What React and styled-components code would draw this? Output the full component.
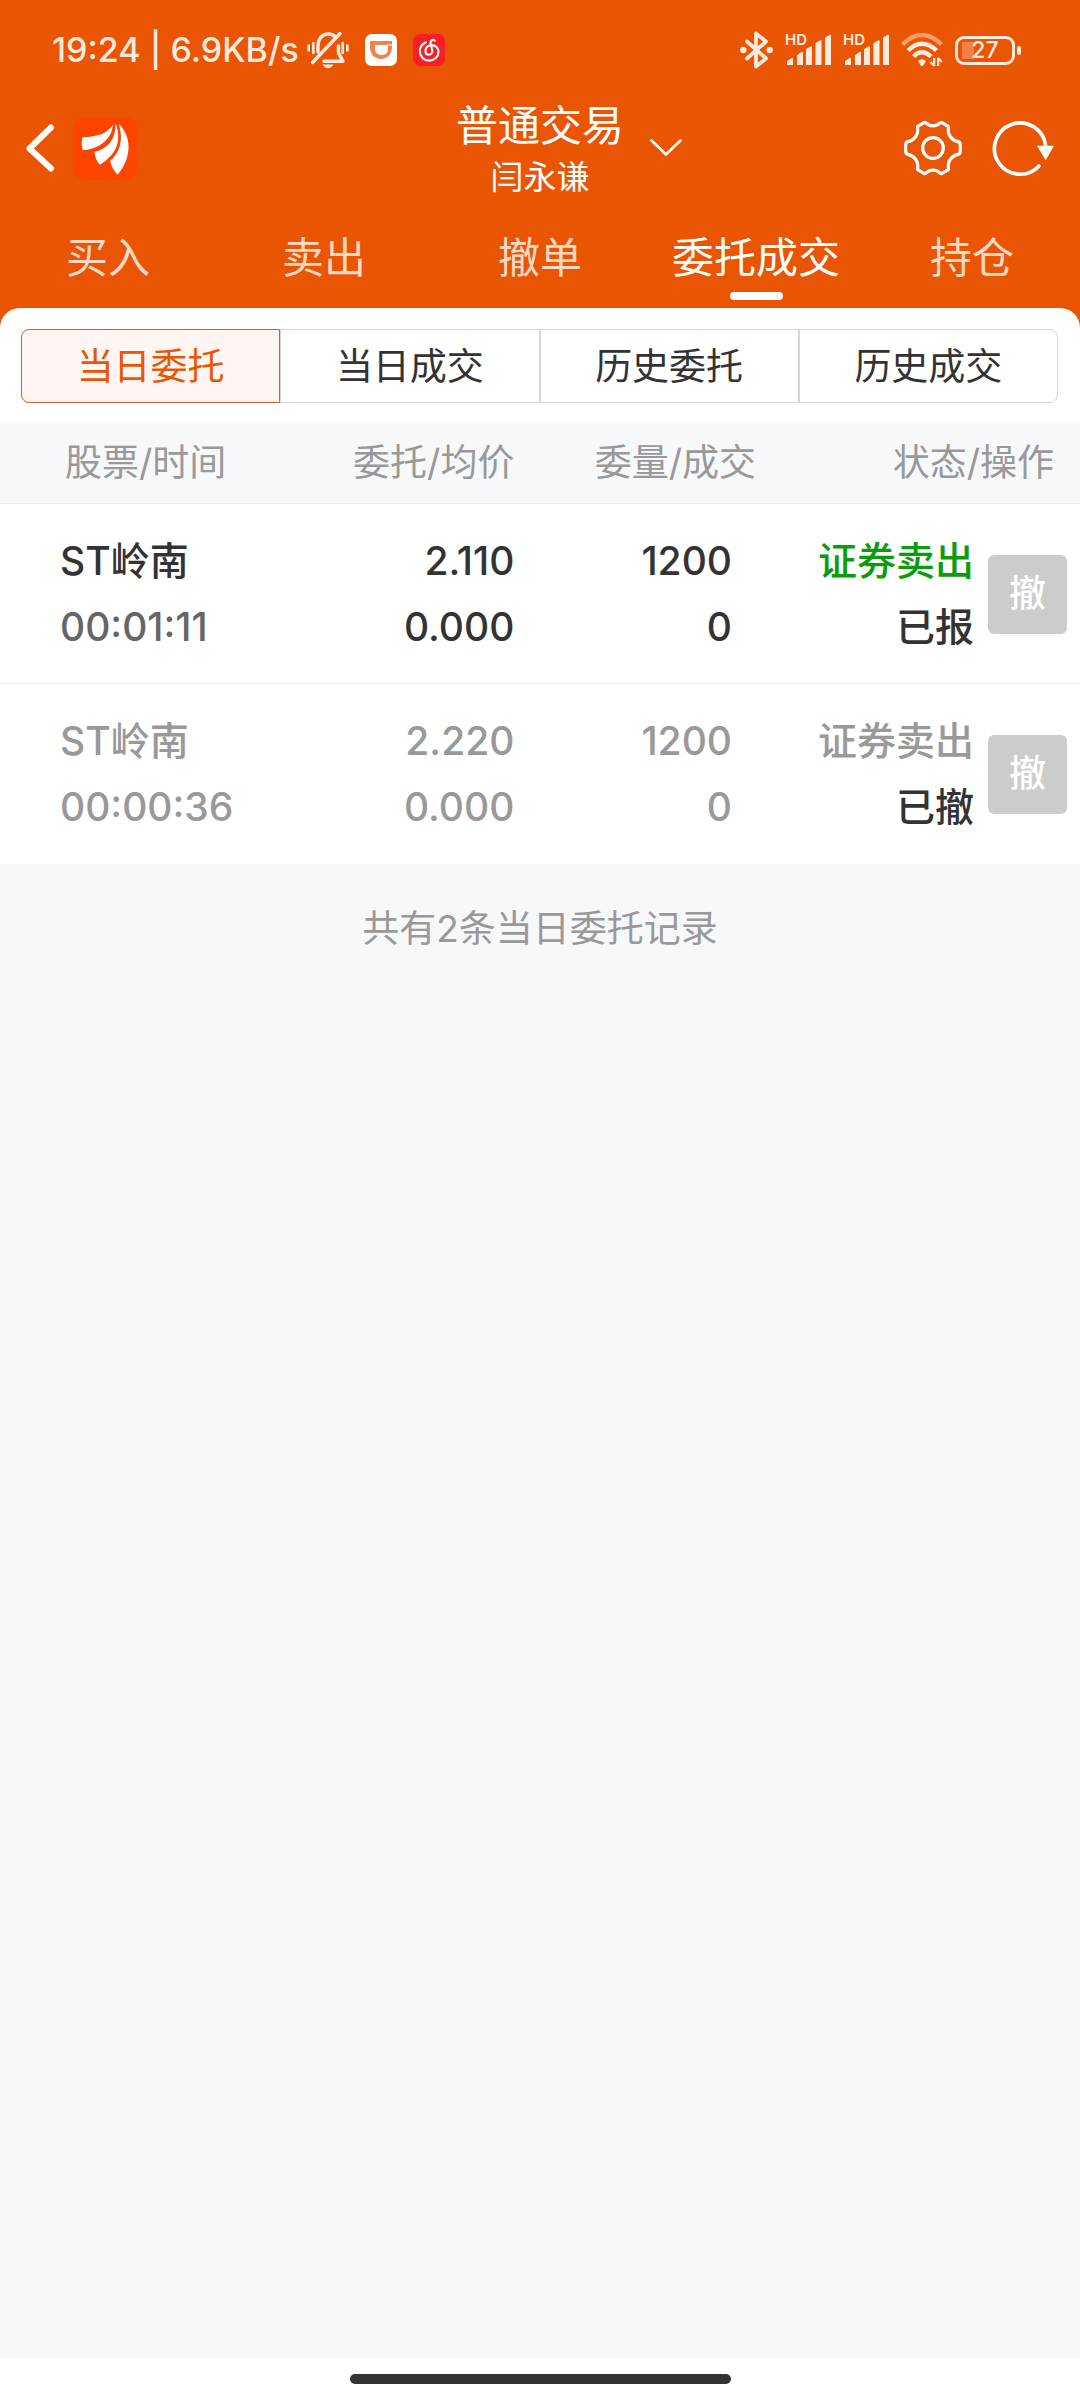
import React, { useState } from "react";
import styled, { createGlobalStyle } from "styled-components";

const brand = "#ea5504";
const statusInk = "#ffeadd";

const GlobalStyle = createGlobalStyle`
  * { box-sizing: border-box; }
  body {
    margin: 0;
    background: #f7f8fa;
    color: #333;
    font-family: Inter, "Noto Sans CJK SC", sans-serif;
  }
  button {
    margin: 0;
    padding: 0;
    border: 0;
    background: none;
    color: inherit;
    font: inherit;
  }
  svg { display: block; flex: none; }
`;

const Screen = styled.div`
  display: flex;
  flex-direction: column;
  min-height: 100vh;
`;

const Header = styled.header`
  background: ${brand};
  color: #fff;
`;

const StatusBar = styled.div`
  display: flex;
  align-items: center;
  justify-content: space-between;
  height: 97px;
  padding: 3px 59px 0 52px;
  color: ${statusInk};
`;

const StatusGroup = styled.div`
  display: flex;
  align-items: center;
  gap: ${(p) => p.$gap}px;
`;

const Clock = styled.span`
  margin-right: -8px;
  font-size: 34px;
  font-weight: 500;
  line-height: 44px;
  white-space: nowrap;
`;

const Battery = styled.div`
  display: flex;
  align-items: center;
  gap: 2px;
`;

const BatteryBody = styled.span`
  display: flex;
  align-items: center;
  justify-content: center;
  width: 60px;
  height: 29px;
  border: 3px solid ${statusInk};
  border-radius: 9px;
  background: linear-gradient(#f28046, #f28046) 4px center / 12px 17px no-repeat;
  font-size: 23px;
  font-weight: 500;
  line-height: 24px;
`;

const BatteryTip = styled.span`
  width: 4px;
  height: 9px;
  border-radius: 2px;
  background: ${statusInk};
`;

const TitleBar = styled.div`
  display: grid;
  grid-template-columns: 1fr auto 1fr;
  align-items: center;
  height: 102px;
  padding: 0 25px;
`;

const BarSide = styled.div`
  display: flex;
  align-items: center;
  gap: ${(p) => p.$gap}px;
`;

const IconButton = styled.button`
  display: block;
  margin-right: ${(p) => (p.$push ? "auto" : "0")};
  margin-left: ${(p) => (p.$push ? "26px" : "0")};
`;

const Titles = styled.div`
  text-align: center;
`;

const Title = styled.h1`
  margin: 0;
  font-size: 42px;
  font-weight: 400;
  line-height: 58px;
`;

const Account = styled.div`
  font-size: 33px;
  line-height: 44px;
`;

const Nav = styled.nav`
  display: flex;
`;

const NavTab = styled.button`
  display: flex;
  flex: 1;
  flex-direction: column;
  align-items: center;
  gap: 4px;
  padding: 29px 0 8px;
  color: ${(p) => (p.$active ? "#fff" : "#ffd9c4")};
  font-size: 42px;
  line-height: 60px;
  white-space: nowrap;

  &::after {
    content: "";
    width: 53px;
    height: 8px;
    border-radius: 4px;
    background: ${(p) => (p.$active ? "#fff" : "transparent")};
  }
`;

const PanelBack = styled.div`
  background: ${brand};
`;

const Panel = styled.div`
  padding: 21px 22px 20px 21px;
  border-radius: 20px 20px 0 0;
  background: #fff;
`;

const Segments = styled.div`
  display: flex;
`;

const Segment = styled.button`
  flex: 1;
  height: 74px;
  padding-top: 2px;
  border: 1px solid ${(p) => (p.$active ? "#c8602f" : "#d3d6da")};
  background: ${(p) => (p.$active ? "#fff6f3" : "#fff")};
  color: ${(p) => (p.$active ? brand : "#333")};
  font-size: 37px;
  line-height: 52px;

  &:first-child { border-radius: 8px 0 0 8px; }
  &:last-child { border-radius: 0 8px 8px 0; }
`;

const Table = styled.table`
  width: 100%;
  table-layout: fixed;
  border-collapse: separate;
  border-spacing: 0;
`;

const Col = styled.col`
  width: ${(p) => p.$w}%;
`;

const HeadCell = styled.th`
  height: 81px;
  padding: 0 ${(p) => p.$right || 0}px 0 ${(p) => p.$left || 0}px;
  border-bottom: 1px solid #ebedef;
  color: #999;
  font-size: 37px;
  font-weight: 400;
  line-height: 52px;
  text-align: ${(p) => (p.$left ? "left" : "right")};
  white-space: nowrap;
`;

const Cell = styled.td`
  padding: 24px ${(p) => p.$right || 0}px 23px ${(p) => p.$left || 0}px;
  border-bottom: 1px solid ${(p) => (p.$last ? "#fff" : "#ebedef")};
  background: #fff;
  color: ${(p) => (p.$muted ? "#999" : "#333")};
  font-size: 39px;
  font-weight: 500;
  line-height: 66px;
  text-align: ${(p) => (p.$left ? "left" : "right")};
  white-space: nowrap;
`;

const Line = styled.div`
  color: ${(p) => p.$color || "inherit"};
`;

const Actions = styled.div`
  display: flex;
  align-items: center;
  justify-content: flex-end;
  gap: 14px;
`;

const CancelButton = styled.button`
  width: 79px;
  height: 79px;
  border-radius: 6px;
  background: #ccc;
  color: #fff;
  font-size: 37px;
  font-weight: 500;
  line-height: 52px;
`;

const Summary = styled.p`
  flex: 1;
  margin: 0;
  padding-top: 39px;
  color: #999;
  font-size: 37px;
  line-height: 52px;
  text-align: center;
`;

const HomeArea = styled.footer`
  display: flex;
  justify-content: center;
  height: 42px;
  padding-top: 16px;
  background: #fff;
`;

const HomeBar = styled.span`
  width: 381px;
  height: 10px;
  border-radius: 5px;
  background: #333;
`;

const MutedBell = () => (
  <svg width="42" height="38" viewBox="0 0 42 38" fill="none" stroke={statusInk} strokeWidth="3.4" strokeLinecap="round">
    <path d="M11 21v-6c0-7 4-12 10-12 3.500 0 6 1.200 8 3.600" />
    <path d="M31.500 15v7l4.500 8.300H17" strokeLinejoin="round" />
    <path d="M5.500 31.500 33 2.500" />
    <path d="M1.700 14.500v5M6.300 12v10M35.700 12v10M40.300 14.500v5" strokeWidth="2.600" />
    <path d="M15.500 33.600h11c-1.500 2.400-3.200 3.600-5.500 3.600s-4-1.200-5.500-3.600z" fill={statusInk} stroke="none" />
  </svg>
);

const RideIcon = () => (
  <svg width="32" height="32" viewBox="0 0 32 32">
    <rect width="32" height="32" rx="7" fill="#fff" />
    <path d="M5 7h22v6c0 7-4.500 12-11 12S5 20 5 13z" fill="#f2824e" />
    <path d="M10 11h13v4c0 3.600-2.500 6-6.500 6S10 18.600 10 15z" fill="#fff" />
    <path d="M21.500 11H27" stroke="#fff" strokeWidth="1" />
  </svg>
);

const MusicIcon = () => (
  <svg width="32" height="32" viewBox="0 0 32 32">
    <rect width="32" height="32" rx="7" fill="#fb1e24" />
    <g fill="none" stroke="#fff" strokeWidth="2.100" strokeLinecap="round">
      <path d="M13 8.300C9 10 6.800 13.500 6.800 17.300c0 5.200 4.200 9.300 9.300 9.300 5.200 0 9.400-3.800 9.400-8.800 0-4-3-6.700-6.800-6.700-3.600 0-6.300 2.400-6.300 5.700 0 2.300 1.500 3.900 3.500 3.900 2.400 0 3.800-2 3.300-4.500L17.600 9c-.5-2.600 2-4 4.200-2.400" />
    </g>
  </svg>
);

const BluetoothIcon = () => (
  <svg width="33" height="38" viewBox="0 0 33 38" fill="none" stroke={statusInk} strokeWidth="3.800" strokeLinejoin="round" strokeLinecap="round">
    <path d="M7 10.500 26 27.500 16 35.500V2.500L26 10.500 7 27.500" />
    <circle cx="3.300" cy="19" r="3.200" fill={statusInk} stroke="none" />
    <circle cx="29.700" cy="19" r="3.200" fill={statusInk} stroke="none" />
  </svg>
);

const Signal = styled.span`
  display: grid;
  width: 46px;
  height: 40px;

  > * { grid-area: 1 / 1; }
  > svg { align-self: center; }
`;

const SignalLabel = styled.span`
  font-size: 15px;
  font-weight: 600;
  line-height: 20px;
`;

const SignalIcon = () => (
  <Signal>
    <svg width="46" height="32" viewBox="0 0 46 32" fill={statusInk}>
      <path d="M2 28q0-1 1-1.500L6.500 24q1.500-.5 1.500.5V31H2zM12 22q0-1 1-1.500L16.500 18q1.500-.5 1.500.5V31h-6zM21 16q0-1 1-1.500L25.500 12.500q1.500-.5 1.500.5V31h-6zM30.500 10q0-1 1-1.500L35 6.500q1.500-.5 1.500.5V31h-6zM40 4.500q0-1 1-1.500L44.500 1q1.500-.5 1.500.5V31h-6z" />
    </svg>
    <SignalLabel>HD</SignalLabel>
  </Signal>
);

const WifiIcon = () => (
  <svg width="42" height="34" viewBox="0 0 42 34" fill="none" strokeWidth="4.400" strokeLinecap="butt">
    <path d="M1.500 11.500Q21-7.500 40.500 11.500" stroke="#f79c6b" />
    <path d="M7 17.500Q21 4 35.500 17.500" stroke={statusInk} />
    <path d="M12.500 23.500Q21 15 30 23.500" stroke={statusInk} />
    <path d="M17 28q4-3.500 8 0l-2.500 4.300q-1.500 1.700-3 0z" fill={statusInk} />
    <path d="M33.200 33v-8M37.200 33v-8" stroke={statusInk} strokeWidth="2.200" />
    <path d="M33.200 33l-3.700-4M37.200 25l3.700 4" stroke={statusInk} strokeWidth="2" />
  </svg>
);

const BackIcon = () => (
  <svg width="30" height="48" viewBox="0 0 30 48" fill="none" stroke="#fff" strokeWidth="6" strokeLinecap="round" strokeLinejoin="round">
    <path d="M26 3.500 4.500 24.500 26 44.500" />
  </svg>
);

const BrandLogo = () => (
  <svg width="63" height="63" viewBox="0 0 190 190" fill="#fff">
    <rect width="190" height="190" rx="34" fill="#ff4400" />
    <path d="M119 20C104 49 72 59 25 61q-4 19 1 39C62 97 111 80 119 20z" />
    <path d="M125 17C128 65 102 96 62 105q2 23 15 39C121 120 150 78 125 17z" />
    <path d="M135 20C150 68 139 105 109 133q5 23 22 41C162 140 186 72 135 20z" />
    <path d="M120 21C119 67 97 86 61 97M130 20C147 72 128 109 101 130" fill="none" stroke="#ff4400" strokeWidth="5" />
  </svg>
);

const ChevronIcon = () => (
  <svg width="32" height="18" viewBox="0 0 32 18" fill="none" stroke="#fff" strokeWidth="2.600" strokeLinecap="round" strokeLinejoin="round">
    <path d="M1.500 1.500 16 15.500 30.500 1.500" />
  </svg>
);

const GearIcon = () => (
  <svg width="58" height="58" viewBox="0 0 180 180" fill="none" stroke="#fff" strokeWidth="10" strokeLinejoin="round">
    <path d="M62 11Q65 9 68 12C80 24 100 24 112 12Q115 9 118 11L135 21Q139 23 138 27C134 48 147 66 170 71Q173 72 174 76Q176 90 174 104Q173 108 170 109C147 114 134 132 138 153Q139 157 135 159L118 169Q115 171 112 168C100 156 80 156 68 168Q65 171 62 169L45 159Q41 157 42 153C46 132 33 114 10 109Q7 108 6 104Q4 90 6 76Q7 72 10 71C33 66 46 48 42 27Q41 23 45 21Z" />
    <circle cx="90" cy="90" r="32" />
  </svg>
);

const RefreshIcon = () => (
  <svg width="64" height="60" viewBox="0 0 192 180" fill="none" stroke="#fff" strokeWidth="11" strokeLinecap="round">
    <path d="M144 144A77 77 0 1 1 164 84" />
    <path d="M138 83h51l-25 44z" fill="#fff" stroke="none" />
  </svg>
);

const navItems = ["买入", "卖出", "撤单", "委托成交", "持仓"];
const segmentItems = ["当日委托", "当日成交", "历史委托", "历史成交"];

const orders = [
  { name: "ST岭南", time: "00:01:11", price: "2.110", avg: "0.000", qty: "1200", filled: "0", side: "证券卖出", state: "已报", muted: false },
  { name: "ST岭南", time: "00:00:36", price: "2.220", avg: "0.000", qty: "1200", filled: "0", side: "证券卖出", state: "已撤", muted: true },
];

function OrderRow({ order, last }) {
  const shared = { $muted: order.muted, $last: last };
  return (
    <tr>
      <Cell {...shared} $left={60}>
        <Line>{order.name}</Line>
        <Line $color={order.muted ? undefined : "#666"}>{order.time}</Line>
      </Cell>
      <Cell {...shared} $right={4}>
        <Line>{order.price}</Line>
        <Line>{order.avg}</Line>
      </Cell>
      <Cell {...shared} $right={24}>
        <Line>{order.qty}</Line>
        <Line>{order.filled}</Line>
      </Cell>
      <Cell {...shared} $right={13}>
        <Actions>
          <div>
            <Line $color={order.muted ? undefined : "#0a9d0a"}>{order.side}</Line>
            <Line $color="#333">{order.state}</Line>
          </div>
          <CancelButton type="button" disabled>撤</CancelButton>
        </Actions>
      </Cell>
    </tr>
  );
}

export default function App() {
  const [nav, setNav] = useState(3);
  const [segment, setSegment] = useState(0);

  return (
    <>
      <GlobalStyle />
      <Screen>
        <Header>
          <StatusBar>
            <StatusGroup $gap={16}>
              <Clock>19:24 | 6.9KB/s</Clock>
              <MutedBell />
              <RideIcon />
              <MusicIcon />
            </StatusGroup>
            <StatusGroup $gap={12}>
              <BluetoothIcon />
              <SignalIcon />
              <SignalIcon />
              <WifiIcon />
              <Battery>
                <BatteryBody>27</BatteryBody>
                <BatteryTip />
              </Battery>
            </StatusGroup>
          </StatusBar>
          <TitleBar>
            <BarSide $gap={19}>
              <IconButton type="button" aria-label="返回"><BackIcon /></IconButton>
              <BrandLogo />
            </BarSide>
            <Titles>
              <Title>普通交易</Title>
              <Account>闫永谦</Account>
            </Titles>
            <BarSide $gap={29}>
              <IconButton type="button" aria-label="切换账户" $push><ChevronIcon /></IconButton>
              <IconButton type="button" aria-label="设置"><GearIcon /></IconButton>
              <IconButton type="button" aria-label="刷新"><RefreshIcon /></IconButton>
            </BarSide>
          </TitleBar>
          <Nav>
            {navItems.map((label, i) => (
              <NavTab key={label} type="button" $active={i === nav} onClick={() => setNav(i)}>{label}</NavTab>
            ))}
          </Nav>
        </Header>
        <PanelBack>
          <Panel>
            <Segments>
              {segmentItems.map((label, i) => (
                <Segment key={label} type="button" $active={i === segment} onClick={() => setSegment(i)}>{label}</Segment>
              ))}
            </Segments>
          </Panel>
        </PanelBack>
        <Table>
          <colgroup>
            <Col $w={30} />
            <Col $w={18} />
            <Col $w={22} />
            <Col $w={30} />
          </colgroup>
          <thead>
            <tr>
              <HeadCell $left={65}>股票/时间</HeadCell>
              <HeadCell $right={4}>委托/均价</HeadCell>
              <HeadCell>委量/成交</HeadCell>
              <HeadCell $right={26}>状态/操作</HeadCell>
            </tr>
          </thead>
          <tbody>
            {orders.map((order, i) => (
              <OrderRow key={order.time} order={order} last={i === orders.length - 1} />
            ))}
          </tbody>
        </Table>
        <Summary>共有2条当日委托记录</Summary>
        <HomeArea><HomeBar /></HomeArea>
      </Screen>
    </>
  );
}
